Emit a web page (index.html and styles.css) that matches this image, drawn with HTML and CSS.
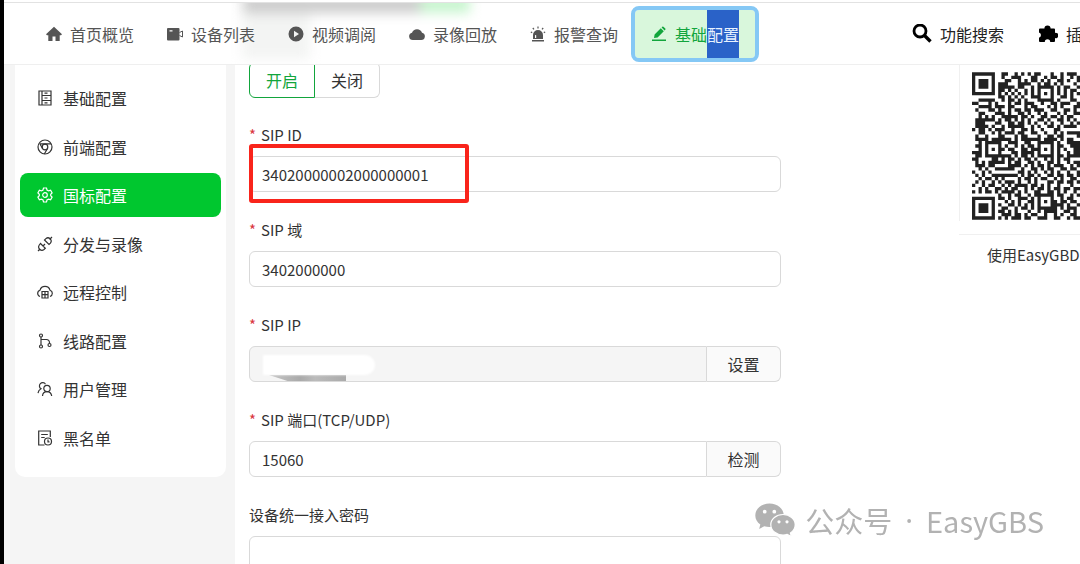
FILE: index.html
```
<!DOCTYPE html>
<html lang="zh-CN">
<head>
    <meta charset="UTF-8">
    <meta name="viewport" content="width=device-width, initial-scale=1.0">
    <title>EasyGBS</title>
    <link rel="stylesheet" href="styles.css">
</head>
<body>
    <header class="header">
        <nav class="nav">
            <a class="nav-item" href="#">
                <svg class="icon" viewBox="0 0 16 16" fill="currentColor"><path d="M8 .8 0 8.3l1 .9h1.3V15H6.5v-4.5h3V15h4.2V9.2H15l1-.9z"/></svg>
                <span>首页概览</span>
            </a>
            <a class="nav-item" href="#">
                <svg class="icon" viewBox="0 0 16 16" fill="currentColor"><path fill-rule="evenodd" d="M1 2h10.500a1 1 0 0 1 1 1v10.500a1 1 0 0 1-1 1H1a1 1 0 0 1-1-1V3a1 1 0 0 1 1-1zm1.500 2.200v1.300h3V4.200z"/><path fill="none" stroke="currentColor" d="M12.500 6.500 15.500 5v6l-3-1.500"/></svg>
                <span>设备列表</span>
            </a>
            <a class="nav-item" href="#">
                <svg class="icon" viewBox="0 0 16 16" fill="currentColor"><path fill-rule="evenodd" d="M8 .5a7.500 7.500 0 1 1 0 15 7.500 7.500 0 0 1 0-15zM6 4.800v6.400L11 8z"/></svg>
                <span>视频调阅</span>
            </a>
            <a class="nav-item" href="#">
                <svg class="icon" viewBox="0 0 16 16" fill="currentColor"><path d="M13 6.700A5.300 5.300 0 0 0 3 6.700 3.700 3.700 0 0 0 3.800 14h8.400A3.700 3.700 0 0 0 13 6.700z"/></svg>
                <span>录像回放</span>
            </a>
            <a class="nav-item" href="#">
                <svg class="icon" viewBox="0 0 16 16" fill="currentColor"><path fill-rule="evenodd" d="M3 13V9a5 5 0 0 1 10 0v4zM5 9v3h1.200V9.200z"/><path d="M2 14h12v1.500H2z"/><path stroke="currentColor" stroke-width="1.200" d="M8 .5v2M2.800 2l1.200 1.400M13.200 2 12 3.400M.8 6l1.400.6M15.200 6l-1.400.6"/></svg>
                <span>报警查询</span>
            </a>
            <a class="nav-item active" href="#">
                <svg class="icon" viewBox="0 0 16 16" fill="currentColor"><path d="M1 13.500h14V15H1zM3 12l.6-3.600L9.800 2.200l3 3-6.200 6.200zM10.600 1.400l.7-.7a.8.8 0 0 1 1.100 0l1.900 1.900a.8.8 0 0 1 0 1.100l-.7.7z"/></svg>
                <span>基础<mark class="marked">配置</mark></span>
            </a>
        </nav>
        <div class="tools">
            <a class="tool" href="#">
                <svg class="tool-icon" viewBox="0 0 20 20" fill="none" stroke="currentColor"><circle cx="8" cy="7" r="6" stroke-width="2.800"/><path stroke-width="3.400" d="m12.500 11.500 6 6"/></svg>
                <span>功能搜索</span>
            </a>
            <a class="tool" href="#">
                <svg class="tool-icon" viewBox="0 0 20 20" fill="currentColor"><path d="M2 4.500h4.400a3.100 3.100 0 1 1 6.200 0H16a1 1 0 0 1 1 1v3.400a2.700 2.700 0 1 1 0 5.200V17a1 1 0 0 1-1 1h-3.800a2.700 2.700 0 0 0-5.400 0H2a1 1 0 0 1-1-1v-3.300a2.700 2.700 0 0 0 0-5.200v-3a1 1 0 0 1 1-1z"/></svg>
                <span>插</span>
            </a>
        </div>
    </header>

    <div class="layout">
        <aside class="sidebar">
            <ul class="menu">
                <li><a class="menu-item" href="#">
                    <svg class="icon" viewBox="0 0 16 16"><path d="M2 1h12v14H2zM5 1v14M5 5.500h9M5 10.500h9M7.500 3.200h3M7.500 8h3M7.500 12.800h3"/></svg>
                    <span>基础配置</span></a></li>
                <li><a class="menu-item" href="#">
                    <svg class="icon" viewBox="0 0 16 16"><circle cx="8" cy="8" r="7"/><circle cx="8" cy="8" r="2.800"/><path d="M3 4.800h11M5.400 9.300 3 5M10.500 9.500 7.300 15"/></svg>
                    <span>前端配置</span></a></li>
                <li><a class="menu-item active" href="#">
                    <svg class="icon" viewBox="0 0 16 16"><path d="M6.500 1h3l.5 2 1.600.9 2-.6 1.500 2.600L13.700 7.300v1.400l1.400 1.400-1.500 2.600-2-.6L10 13l-.5 2h-3L6 13l-1.600-.9-2 .6L.9 10.100l1.400-1.400V7.300L.9 5.900l1.500-2.600 2 .6L6 3z"/><circle cx="8" cy="8" r="2.300"/></svg>
                    <span>国标配置</span></a></li>
                <li><a class="menu-item" href="#">
                    <svg class="icon" viewBox="0 0 16 16"><path d="m7.500 4 4.500 4.500 1.400-1.400a3.200 3.200 0 0 0-4.500-4.500zM3.500 7.500 8.300 12.300 7 13.500A3.300 3.300 0 0 1 2.300 9zM12.500 3.500 15 1M1 15l2-2M6 10l2-2"/></svg>
                    <span>分发与录像</span></a></li>
                <li><a class="menu-item" href="#">
                    <svg class="icon" viewBox="0 0 16 16"><path d="M3 12.500a3.300 3.300 0 0 1 0-6.300 5.200 5.200 0 0 1 10 0 3.300 3.300 0 0 1 0 6.300M5 7.500h6v6.500H5zM5 10.700h6M8 7.500V14"/></svg>
                    <span>远程控制</span></a></li>
                <li><a class="menu-item" href="#">
                    <svg class="icon" viewBox="0 0 16 16"><circle cx="4" cy="2.500" r="1.500"/><circle cx="4" cy="13.500" r="1.500"/><circle cx="12.500" cy="12" r="1.500"/><path d="M4 4v8M4 6.500h5.500a3 3 0 0 1 3 3v1"/></svg>
                    <span>线路配置</span></a></li>
                <li><a class="menu-item" href="#">
                    <svg class="icon" viewBox="0 0 16 16"><path d="M8.500 3.200A3.300 3.300 0 1 0 4 7.800C2.300 8.600 1.300 10 1 12.200M5.500 15c.2-2.600 1.800-4.300 4.500-4.300s4.300 1.700 4.700 4.300"/><circle cx="10" cy="7.500" r="3.200"/></svg>
                    <span>用户管理</span></a></li>
                <li><a class="menu-item" href="#">
                    <svg class="icon" viewBox="0 0 16 16"><path d="M7.500 15H1.700V1h11.600v6M4.200 4.500h6.600M4.200 7.500h3.500"/><circle cx="11" cy="11.500" r="3.500"/><path d="M11 9.500v2.300h1.500"/></svg>
                    <span>黑名单</span></a></li>
            </ul>
        </aside>

        <main class="content">
            <form class="form">
                <div class="switch">
                    <label class="switch-item"><input type="radio" name="enable" checked><span>开启</span></label>
                    <label class="switch-item"><input type="radio" name="enable"><span>关闭</span></label>
                </div>
                <div class="field highlight">
                    <label class="required" for="sipId">SIP ID</label>
                    <input class="text" id="sipId" type="text" value="34020000002000000001">
                </div>
                <div class="field">
                    <label class="required" for="sipDomain">SIP 域</label>
                    <input class="text" id="sipDomain" type="text" value="3402000000">
                </div>
                <div class="field">
                    <label class="required" for="sipIp">SIP IP</label>
                    <div class="group masked">
                        <input class="text" id="sipIp" type="text" disabled>
                        <button class="addon" type="button">设置</button>
                    </div>
                </div>
                <div class="field">
                    <label class="required" for="sipPort">SIP 端口(TCP/UDP)</label>
                    <div class="group">
                        <input class="text" id="sipPort" type="text" value="15060">
                        <button class="addon" type="button">检测</button>
                    </div>
                </div>
                <div class="field">
                    <label for="password">设备统一接入密码</label>
                    <input class="text" id="password" type="text">
                </div>
            </form>
            <section class="qr">
                <div class="qr-box"><svg class="qr-code" id="qrCode" viewBox="0 0 33 45"></svg></div>
                <p class="qr-text">使用EasyGBD</p>
            </section>
        </main>
    </div>

    <div class="watermark">
        <svg class="wechat" viewBox="0 0 40 34"><path fill="#b2b2b2" fill-rule="evenodd" d="M14.500.5C6.500.5.3 5.800.3 12.400c0 3.700 1.900 6.900 5 9.100L4.200 26l5-2.700c1.700.5 3.500.8 5.300.8 8 0 14.300-5.100 14.300-11.700S22.500.5 14.500.5zM9.700 6.800a1.900 1.900 0 1 1 0 3.800 1.900 1.900 0 0 1 0-3.800zm9.600 0a1.900 1.900 0 1 1 0 3.800 1.900 1.900 0 0 1 0-3.800z"/><path fill="#b2b2b2" stroke="#fff" stroke-width="1.200" d="M28 11.500c-6.800 0-12.200 4.400-12.200 10.200S21.200 32 28 32c1.500 0 2.900-.2 4.200-.6l4.200 2.200-1-3.700c3-1.900 4.800-4.900 4.800-8.200 0-5.800-5.400-10.200-12.200-10.200z"/><g fill="#fff"><circle cx="24" cy="18.800" r="1.600"/><circle cx="32" cy="18.800" r="1.600"/></g></svg>
        <div class="watermark-text">
            <span>公众号</span>
            <span class="dot">·</span>
            <span>EasyGBS</span>
        </div>
    </div>

    <script src="script.js"></script>
</body>
</html>
```
FILE: styles.css
```
*, *::before, *::after { box-sizing: border-box; }
body {
    margin: 0;
    min-height: 100vh;
    border-left: 4px solid #000;
    background: #f5f5f5;
    color: #333;
    font: 16px/24px "Noto Sans CJK SC", sans-serif;
    overflow: hidden;
}
a { color: inherit; text-decoration: none; }
.icon { width: 16px; height: 16px; flex: none; }

/* header */
.header {
    position: relative;
    z-index: 1;
    display: flex;
    justify-content: space-between;
    height: 63px;
    padding-left: 26px;
    background: #fff;
    border-top: 1px solid #e2e2e2;
    border-bottom: 1px solid #efefef;
    box-shadow: 0 -2px #fff;
    margin-top: 2px;
    white-space: nowrap;
    overflow: hidden;
}
.header::before, .header::after {
    content: "";
    position: absolute;
    top: -8px;
    filter: blur(6px);
}
.header::before {
    z-index: 1;
    left: 240px;
    width: 226px;
    height: 18px;
    background: linear-gradient(90deg, #ccc 76%, #c8f5cf 80%);
}
.header::after {
    left: 238px;
    width: 68px;
    height: 64px;
    background: #f3f4f3;
}
.nav { position: relative; z-index: 1; display: flex; align-items: center; gap: 1px; }
.nav-item {
    display: flex;
    align-items: center;
    gap: 8px;
    padding: 0 16px;
    line-height: 48px;
    color: #555;
}
.nav-item.active {
    background: #d9f7dc;
    color: #12a53c;
    border-radius: 4px;
    outline: 4px solid #85c8f5;
}
.marked { display: inline-block; background: #2a62c8; color: #e8f2ff; }
.tools { display: flex; align-items: center; gap: 34px; width: 168px; overflow: hidden; color: #222; }
.tool { display: flex; align-items: center; gap: 8px; flex: none; }
.tool-icon { width: 20px; height: 20px; color: #000; }

/* sidebar */
.layout { display: flex; }
.sidebar { width: 231px; flex: none; padding: 0 9px 0 11px; }
.menu {
    display: grid;
    grid-auto-rows: 1fr;
    min-height: 412px;
    margin: 0;
    padding: 9px 5px 15px;
    list-style: none;
    background: #fff;
    border-radius: 0 0 10px 10px;
}
.menu-item {
    display: flex;
    align-items: center;
    gap: 10px;
    height: 44px;
    margin: 2px 0;
    padding: 0 17px;
    border-radius: 8px;
}
.menu-item .icon { fill: none; stroke: currentColor; stroke-width: 1.2; }
.menu-item.active { background: #00c72f; color: #fff; }

/* form */
.content {
    display: flex;
    flex: 1;
    justify-content: space-between;
    min-width: 0;
    min-height: calc(100vh - 65px);
    padding-left: 14px;
    background: #fff;
    overflow: hidden;
}
.form { flex: 1; max-width: 532px; }
.switch { display: flex; margin: -3px 0 25px; }
.switch-item input { position: absolute; opacity: 0; }
.switch-item span {
    display: block;
    height: 36px;
    padding: 0 16px;
    line-height: 34px;
    border: 1px solid #d9d9d9;
    border-left: 0;
    border-radius: 0 6px 6px 0;
}
.switch-item input:checked + span {
    border: 1px solid #12a53c;
    border-radius: 6px 0 0 6px;
    color: #12a53c;
}
.field {
    position: relative;
    display: grid;
    gap: 9px;
    margin-bottom: 26px;
    font-size: 15px;
}
.required::before { content: "*"; margin-right: 5px; color: #d9363e; }
.text {
    width: 100%;
    min-width: 0;
    height: 36px;
    padding: 0 12px;
    border: 1px solid #d9d9d9;
    border-radius: 6px;
    background: #fff;
    color: #333;
    font: inherit;
    line-height: 24px;
}
.text:disabled { background: #f5f5f5; }
.group { position: relative; display: flex; }
.group .text { border-radius: 6px 0 0 6px; }
.addon {
    width: 74px;
    flex: none;
    padding: 0;
    border: 1px solid #d9d9d9;
    border-left: 0;
    border-radius: 0 6px 6px 0;
    background: #fafafa;
    color: #333;
    font: inherit;
    font-size: 16px;
}
.highlight::after {
    content: "";
    position: absolute;
    top: 21px;
    left: 0;
    width: 220px;
    height: 59px;
    border: 4px solid #f9241b;
    border-radius: 3px;
}
.field { margin-bottom: 26px; }
.masked::before {
    content: "";
    position: absolute;
    left: 20px;
    bottom: 1px;
    width: 77px;
    height: 6px;
    background: linear-gradient(90deg, #c6c6c6, #aaa 40%, #bbb 60%, #aaa);
    clip-path: polygon(0 0, 100% 0, 100% 100%, 24% 100%);
}
.masked::after {
    content: "";
    position: absolute;
    left: 14px;
    top: 9px;
    width: 112px;
    height: 20px;
    border-radius: 0 10px 10px 0;
    background: #fff;
    filter: blur(1px);
}

/* client download */
.qr { width: 121px; flex: none; }
.qr-box { padding: 7px 0 1px 12px; border-left: 1px solid #f0f0f0; overflow: hidden; }
.qr-code { display: block; width: 108px; height: 148px; fill: #222; }
.qr-text {
    margin: 13px 0 0;
    padding: 8px 0 0 28px;
    border-top: 1px solid #f0f0f0;
    font-size: 15px;
    white-space: nowrap;
}

.watermark {
    position: fixed;
    right: 36px;
    bottom: 27px;
    display: flex;
    align-items: center;
    gap: 10px;
    color: #b2b2b2;
    font-size: 29px;
    line-height: 34px;
}
.watermark-text { display: flex; gap: 13px; }
.dot { font-family: "Noto Sans", sans-serif; }
.wechat { width: 40px; height: 34px; }
```
FILE: script.js
```
// one string per row of modules, # is dark
const rows = [
    '#######..##..#.#.#.##...#..#.###.',
    '#.....#..#..###...##..#.##.#..#.#',
    '#.###.#...##..#.#.##.#.#..##.#..#',
    '#.###.#.###...####..#.##.#.#...#.',
    '#.###.#.#####.##..#.#####.#.##..#',
    '#.....#.##.#.#..#.#.#...#.#.#.##.',
    '#######.#.#.#.#.#.#.#.#.#.#.#.#.#',
    '........##.#.#.#..###...#..##.#..',
    '..#####..#.##.#.#...#####.#...##.',
    '##...#.#...#.##.###..#..##.###..#',
    '..####.###.##...#.##...#.#.#...##',
    '.#...##.#..#.##.##.###..##..##.#.',
    '..##...###.#..##.#..#.#...#.#..##',
    '..#.#.#..#####.##.#..##.##.#.##..',
    '.######.#.##.#.#.#..##.#..##.#.#.',
    '.###...##..##.##.#.#..#.#..#..#.#',
    '.####.#..#.#####..#.#..##.#.####.',
    '#.##.#.###..#..##.#..#...##......',
    '..##..#.#.###.##..##..#..#.#.####',
    '.#..#...##...#.##...#..##.##....#',
    '.####.######.#.######.####.#.##..',
    '..#.#####..###..##..#####.#..####',
    '.##.#...#.#..#.#.##.#...#.##..###',
    '..#.#.#.##.##..##.###.#.#.#.#..##',
    '###.#...#...##.####.#...#.#..#.##',
    '.##.########.#.##.#.#####.##.####',
    '##....##.#.##.#.##.#..#.#.#.##...',
    '.#.#.#####.#.##..##.#..##.#..#.##',
    '.###.##....####.#.#.##.#.###..#.#',
    '..#.#..######..#..##.#.##..##.##.',
    '#..#.#........##.#.#..#.#.#..#..#',
    '.#.#..########.#.##.#..##.##.##.#',
    '..#.##.#.#....#.##.#.##..#.#..##.',
    '.#.#..#.#.###.#..#.#...##.##.##.#',
    '#..#.##..#.#.####.##.#.#..#...#..',
    '..#.#..##.#.##..#.#.##.#.##.##.##',
    '#.#.##.#.####.#.#..##..##.#.#..#.',
    '........#..#.##..#.######.##..#.#',
    '#######.##.#..###.#.#...#..#.##..',
    '#.....#...#.#.#..##.#.#.##.##.##.',
    '#.###.#.#..##.#.#.#.#...####.#..#',
    '#.###.#..##..#.##.#.######.#.###.',
    '#.###.#.##.#.#...#..#.####..##.#.',
    '#.....#..###.##.#.##..#..#.#..##.',
    '#######.#.#.###.##..###..##..#.##'
];

let d = '';
rows.forEach((row, y) => {
    for (const run of row.matchAll(/#+/g)) {
        d += `M${run.index} ${y}h${run[0].length}v1h-${run[0].length}z`;
    }
});

const path = document.createElementNS('http://www.w3.org/2000/svg', 'path');
path.setAttribute('d', d);
document.getElementById('qrCode').appendChild(path);
```
